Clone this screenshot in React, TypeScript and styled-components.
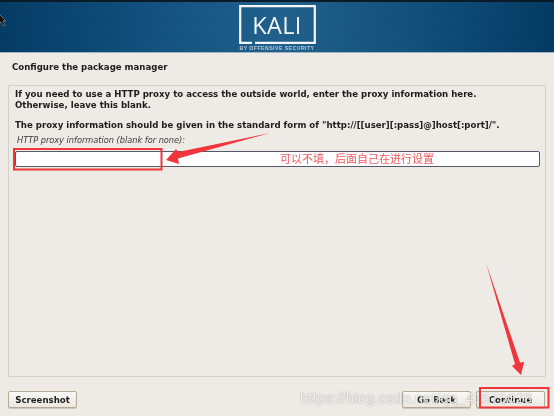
import styled, { createGlobalStyle } from 'styled-components';

const GlobalStyle = createGlobalStyle`
  html, body {
    margin: 0;
    padding: 0;
    background: #eeebe6;
  }
`;

const Screen = styled.div`
  position: relative;
  width: 554px;
  height: 416px;
  overflow: hidden;
  display: flex;
  flex-direction: column;
  background: #eeebe6;
  font-family: 'DejaVu Sans', sans-serif;
  color: #1c1c1c;
  filter: blur(0.3px);
`;

const Banner = styled.header`
  height: 50px;
  flex: none;
  display: flex;
  flex-direction: column;
  align-items: center;
  border-top: 2px solid #0a1a26;
  border-bottom: 1px solid #9fb4c4;
  background:
    repeating-linear-gradient(135deg, rgba(255, 255, 255, 0.025) 0 1px, transparent 1px 3px),
    linear-gradient(90deg, #033a63 0%, #0d4c78 22%, #1f5f8b 50%, #0f4e79 76%, #023962 100%);
`;

const LogoFrame = styled.div`
  position: relative;
  width: 77px;
  height: 39px;
  margin-top: 3px;
  display: flex;
  align-items: center;
  justify-content: center;
  flex: none;

  svg {
    position: absolute;
    inset: 0;
  }
`;

const LogoWord = styled.span`
  font-family: 'Open Sans', 'Liberation Sans', sans-serif;
  font-size: 23.5px;
  line-height: 24px;
  letter-spacing: 0.4px;
  color: #f4f7f9;
`;

const LogoTag = styled.span`
  margin-top: 1px;
  font-family: 'Liberation Sans', sans-serif;
  font-weight: 700;
  font-size: 5.2px;
  line-height: 6px;
  letter-spacing: 0.45px;
  color: #b9cbd8;
`;

const PageTitle = styled.h1`
  margin: 0;
  height: 32px;
  flex: none;
  padding: 8px 0 0 12px;
  box-sizing: border-box;
  font-size: 8.6px;
  line-height: 12px;
  font-weight: 700;
`;

const Panel = styled.section`
  flex: 1;
  margin: 0 8px;
  padding: 3px 5px 0 6px;
  border: 1px solid #d5d0c6;
  border-radius: 1px;
`;

const Paragraph = styled.p<{ $gap: number }>`
  margin: 0 0 ${(p) => p.$gap}px;
  font-size: 8.6px;
  line-height: 11px;
  font-weight: 700;
  white-space: nowrap;
`;

const FieldLabel = styled.label`
  display: block;
  margin: 3px 0 0 2px;
  font-size: 8.2px;
  line-height: 12px;
  font-style: italic;
  color: #3a3a3a;
`;

const TextField = styled.div`
  height: 14px;
  margin-top: 5px;
  background: #fff;
  border: 1px solid #53586a;
  border-radius: 2px;
`;

const Footer = styled.footer`
  height: 39px;
  flex: none;
  box-sizing: border-box;
  padding: 14px 9px 0 8px;
  display: flex;
  align-items: flex-start;
  gap: 5px;
`;

const Button = styled.div<{ $push?: boolean }>`
  width: 69px;
  height: 17px;
  box-sizing: border-box;
  margin-left: ${(p) => (p.$push ? 'auto' : '0')};
  display: flex;
  align-items: center;
  justify-content: center;
  font-size: 8.6px;
  font-weight: 700;
  background: linear-gradient(#faf9f7, #ebe7e0);
  border: 1px solid #b3a994;
  border-radius: 2px;
  box-shadow: 0 1px 0 #cfc8ba;
`;

const Annotations = styled.svg`
  position: absolute;
  inset: 0;
  pointer-events: none;
`;

const Note = styled.span`
  position: absolute;
  left: 280px;
  top: 150px;
  font-family: 'Noto Sans CJK SC', sans-serif;
  font-size: 11px;
  line-height: 16px;
  white-space: nowrap;
  color: #f2585c;
`;

const Watermark = styled.span`
  position: absolute;
  left: 300px;
  top: 389px;
  font-family: 'Liberation Sans', sans-serif;
  font-size: 14.5px;
  line-height: 18px;
  letter-spacing: 0.3px;
  white-space: nowrap;
  color: rgba(255, 255, 255, 0.8);
  text-shadow: 0 0 1.5px rgba(110, 110, 110, 0.75);
`;

const Pointer = styled.svg`
  position: absolute;
  left: 0;
  top: 14px;
`;

export default function App() {
  return (
    <>
      <GlobalStyle />
      <Screen>
        <Banner>
          <LogoFrame>
            <svg width="77" height="39" viewBox="0 0 77 39" fill="none">
              <path
                d="M13 37.8 H1.2 V1.2 H75.8 V37.8 H16"
                stroke="#f4f7f9"
                strokeWidth="2.2"
              />
            </svg>
            <LogoWord>KALI</LogoWord>
          </LogoFrame>
          <LogoTag>BY OFFENSIVE SECURITY</LogoTag>
        </Banner>
        <PageTitle>Configure the package manager</PageTitle>
        <Panel>
          <Paragraph $gap={9}>
            If you need to use a HTTP proxy to access the outside world, enter the proxy
            information here.
            <br />
            Otherwise, leave this blank.
          </Paragraph>
          <Paragraph $gap={0}>
            The proxy information should be given in the standard form of
            "http://[[user][:pass]@]host[:port]/".
          </Paragraph>
          <FieldLabel>HTTP proxy information (blank for none):</FieldLabel>
          <TextField />
        </Panel>
        <Footer>
          <Button>Screenshot</Button>
          <Button $push>Go Back</Button>
          <Button>Continue</Button>
        </Footer>
        <Watermark>https://blog.csdn.net/qq_41575028</Watermark>
        <Annotations width="554" height="416" viewBox="0 0 554 416">
          <rect x="14" y="149" width="147.5" height="20.5" fill="none" stroke="#f0353b" strokeWidth="2" />
          <rect x="480" y="388" width="68.5" height="19.5" fill="none" stroke="#f0353b" strokeWidth="2" />
          <path d="M270 133 L178 152 L176 149 L166 160 L179 164 L178 158.5 Z" fill="#f0353b" />
          <path d="M486 263 L515 364 L512 366 L521 375 L524 362 L520 362.5 Z" fill="#f0353b" />
        </Annotations>
        <Note>可以不填，后面自己在进行设置</Note>
        <Pointer width="7" height="12" viewBox="0 0 7 12">
          <path d="M-1 0 L6 7 L3 7 L5 11 L3 12 L1 8 L-1 10 Z" fill="#111" stroke="#ddd" strokeWidth="0.4" />
        </Pointer>
      </Screen>
    </>
  );
}
